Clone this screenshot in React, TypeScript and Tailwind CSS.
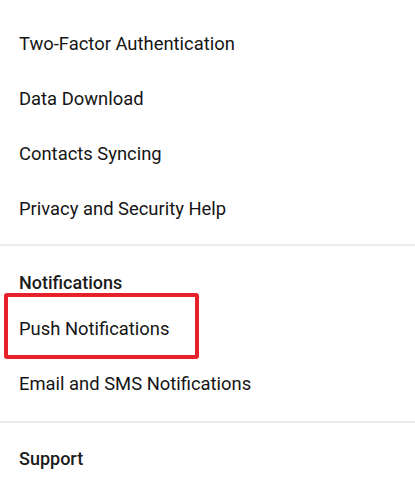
const privacy = [
  "Two-Factor Authentication",
  "Data Download",
  "Contacts Syncing",
  "Privacy and Security Help",
];

function Row({ label }: { label: string }) {
  return (
    <div className="h-[55px] flex items-center px-[19px] text-[18.4px] text-[#151515]">
      {label}
    </div>
  );
}

export default function App() {
  return (
    <div className="w-[415px] h-[485px] bg-white overflow-hidden" style={{ fontFamily: "Roboto, 'Liberation Sans', sans-serif" }}>
      <div className="pt-[16px] pb-[8px]">
        {privacy.map((p) => (
          <Row key={p} label={p} />
        ))}
      </div>
      <div className="h-[2px] bg-[#ebebeb]" />

      <div className="pt-[18px] pb-[10px]">
        <div className="h-[37px] flex items-center px-[19px] text-[18px] font-medium text-[#1b1b1b]">
          Notifications
        </div>
        <div className="relative">
          <Row label="Push Notifications" />
          <div className="absolute left-[4px] top-[-8px] w-[195px] h-[66px] border-[4px] border-[#e8202a] rounded-[3px]" />
        </div>
        <Row label="Email and SMS Notifications" />
      </div>
      <div className="h-[2px] bg-[#ebebeb]" />

      <div className="pt-[7px]">
        <div className="h-[56px] flex items-center px-[19px] text-[18px] font-medium text-[#1b1b1b]">
          Support
        </div>
      </div>
    </div>
  );
}
